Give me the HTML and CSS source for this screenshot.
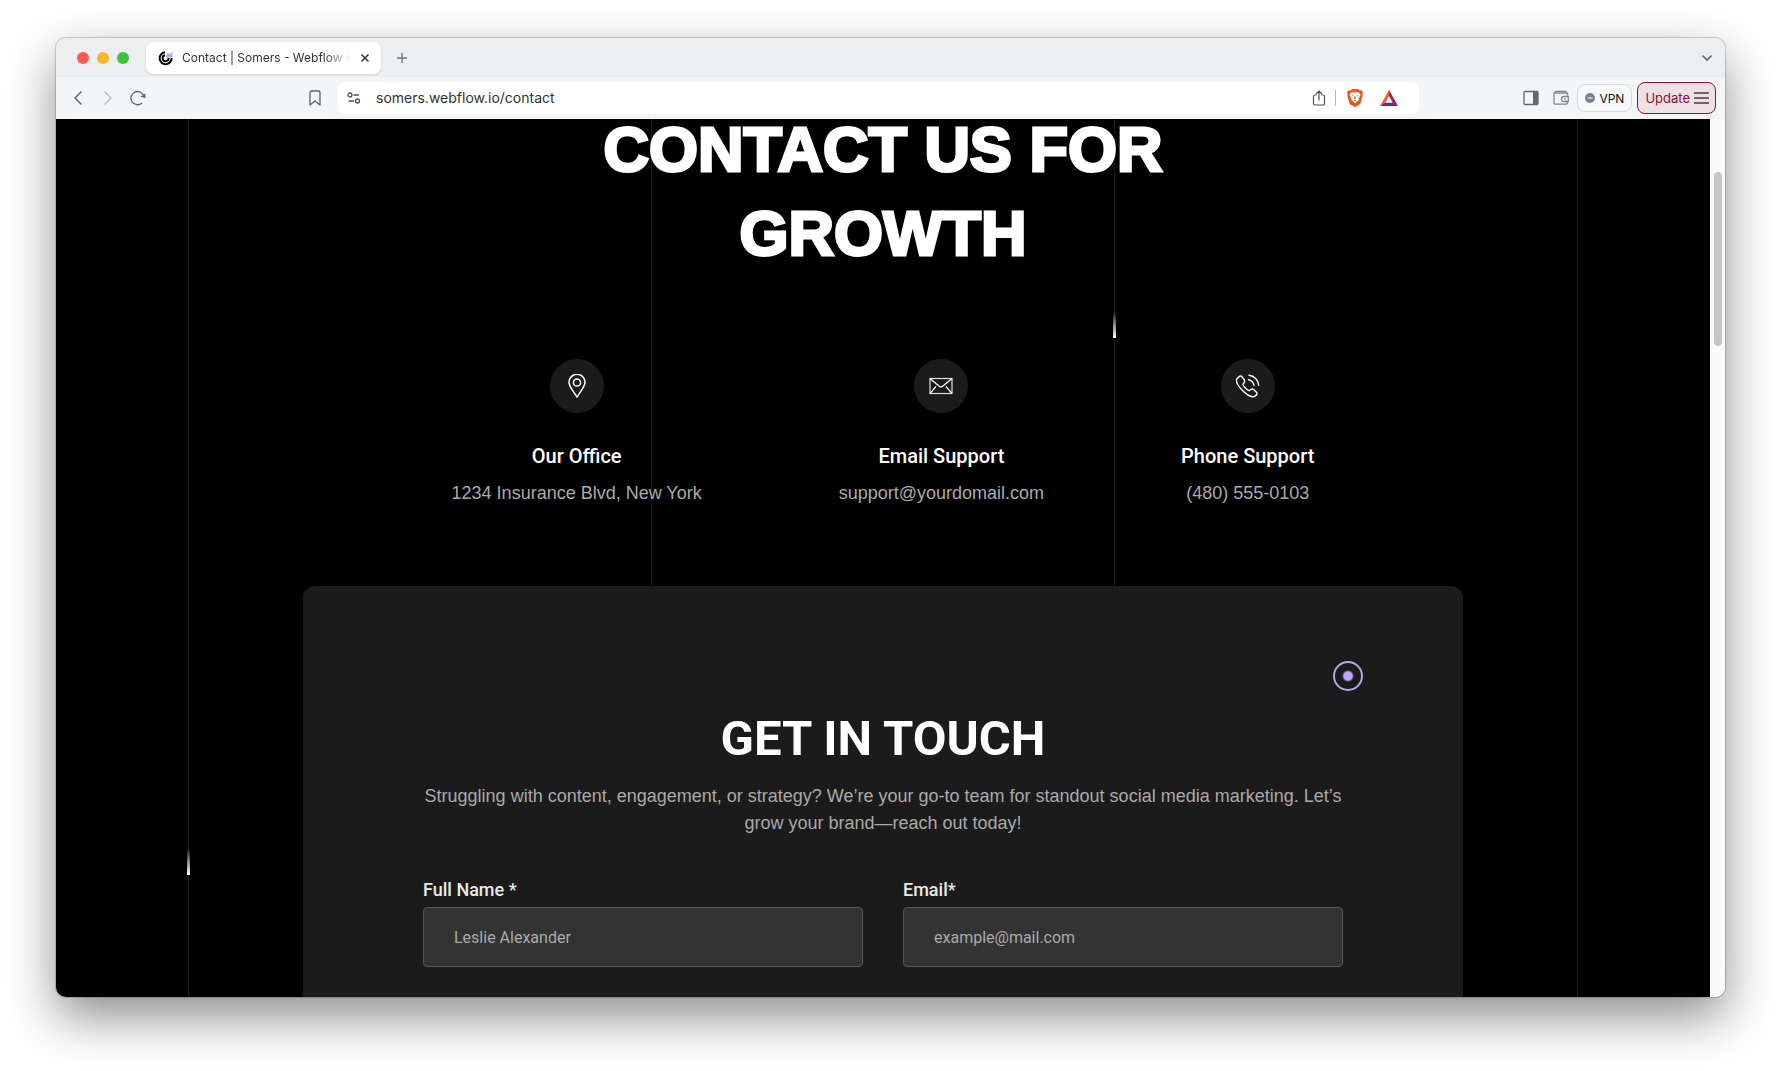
FILE: index.html
```html
<!DOCTYPE html>
<html lang="en">
<head>
  <meta charset="UTF-8" />
  <meta name="viewport" content="width=device-width, initial-scale=1.0"/>
  <title>Contact | Somers - Webflow</title>
  <link rel="stylesheet" href="styles.css">
</head>
<body>
  <div class="window">
    <div class="tabbar">
      <div class="lights">
        <span class="light red"></span>
        <span class="light yellow"></span>
        <span class="light green"></span>
      </div>
      <div class="tab">
        <svg class="favicon" width="16" height="16" viewBox="0 0 16 16" fill="none">
          <path d="M7 2.2A6 6 0 1 0 13.6 8" stroke="#000" stroke-width="2"/>
          <path d="M7 5.2A3 3 0 1 0 10.6 8" stroke="#000" stroke-width="2"/>
          <path d="M8 8l1-5 3 1 3-3-1 4 1 2z" fill="#b9a6f5"/>
        </svg>
        <span class="tab-title">Contact | Somers - Webflow HTML</span>
        <button class="icon-btn tab-close" aria-label="Close tab">
          <svg width="10" height="10" viewBox="0 0 10 10" stroke="#333" stroke-width="1.500"><path d="M1.500 1.500l7 7M8.500 1.500l-7 7"/></svg>
        </button>
      </div>
      <button class="icon-btn new-tab" aria-label="New tab">
        <svg width="12" height="12" viewBox="0 0 12 12" stroke="#6b7075" stroke-width="1.300"><path d="M6 1v10M1 6h10"/></svg>
      </button>
      <button class="icon-btn tab-list" aria-label="Search tabs">
        <svg width="12" height="8" viewBox="0 0 12 8" fill="none" stroke="#56656d" stroke-width="1.600"><path d="M1.500 1.500L6 6l4.500-4.500"/></svg>
      </button>
    </div>

    <div class="toolbar">
      <div class="nav">
        <button class="icon-btn" aria-label="Back">
          <svg width="16" height="16" viewBox="0 0 16 16" fill="none" stroke="#56656d" stroke-width="1.400"><path d="M11.500 1.500L5 8l6.500 6.500"/></svg>
        </button>
        <button class="icon-btn" aria-label="Forward">
          <svg width="16" height="16" viewBox="0 0 16 16" fill="none" stroke="#b9c0c4" stroke-width="1.400"><path d="M4.500 1.500L11 8l-6.500 6.500"/></svg>
        </button>
        <button class="icon-btn" aria-label="Reload">
          <svg width="16" height="16" viewBox="0 0 16 16" fill="none" stroke="#56656d" stroke-width="1.300"><path d="M12 13A6.600 6.600 0 1 1 13.800 6"/><path d="M15.500 3.500v4.500l-5-1.200z" fill="#56656d" stroke="none"/></svg>
        </button>
      </div>
      <button class="icon-btn bookmark" aria-label="Bookmark">
        <svg width="12" height="16" viewBox="0 0 12 16" fill="none" stroke="#56656d" stroke-width="1.300" stroke-linejoin="round"><path d="M1 2.500A1.500 1.500 0 0 1 2.500 1h7A1.500 1.500 0 0 1 11 2.500V15l-5-4-5 4z"/></svg>
      </button>
      <div class="address">
        <svg width="14" height="12" viewBox="0 0 14 12" fill="none" stroke="#4b5358" stroke-width="1.300"><circle cx="3" cy="3" r="2"/><path d="M6.500 3H12"/><circle cx="10.500" cy="9" r="2"/><path d="M1.500 9H7"/></svg>
        <input class="url" type="text" value="somers.webflow.io/contact" aria-label="Address">
        <button class="icon-btn" aria-label="Share">
          <svg width="14" height="16" viewBox="0 0 14 16" fill="none" stroke="#4b5358" stroke-width="1.200"><path d="M4.500 5H3a1.500 1.500 0 0 0-1.500 1.500v7A1.500 1.500 0 0 0 3 15h8a1.500 1.500 0 0 0 1.500-1.500v-7A1.500 1.500 0 0 0 11 5H9.500M7 10.500V1.500M4 4l3-3 3 3"/></svg>
        </button>
        <span class="divider"></span>
        <button class="icon-btn shield" aria-label="Brave Shields">
          <svg width="16" height="18" viewBox="0 0 16 18"><path d="M5 0h6l1.500 1.500 2-.2L16 3.500l-.7 1.700.4 1.300-2 7.500-1.400 1.700L8 18l-4.300-2.300L2.300 14 .3 6.500l.4-1.300L0 3.500l1.500-2.200 2 .2z" fill="#e8571f"/><path d="M4 3.500L6 3l2 .6L10 3l2 .5 1.500 2.500-2 4 .2 1.500-2 1.300L8 14.500l-1.700-2.200-2-1.300.2-1.500-2-3.500z" fill="#fff"/><path d="M4.500 6l2.200.5-.5 1zM11.500 6l-2.200.5.5 1zM7.600 7h.8l.4 2.500L8 10.200l-.8-.7zM6.600 11.300L8 10.900l1.400.4L8 12.300z" fill="#e8571f"/></svg>
        </button>
        <button class="icon-btn rewards" aria-label="Brave Rewards">
          <svg width="18" height="16" viewBox="0 0 18 16"><path d="M9 0L0 16l5-2.800L9 6z" fill="#ff5a2d"/><path d="M9 0l9 16-5-2.800L9 6z" fill="#9e1f63"/><path d="M0 16h18l-5-3.300H5z" fill="#5b2f91"/></svg>
        </button>
      </div>
      <div class="actions">
        <button class="icon-btn" aria-label="Sidebar">
          <svg width="16" height="16" viewBox="0 0 16 16"><rect x="1" y="1.500" width="14" height="13" rx="1" fill="none" stroke="#5b6b73" stroke-width="1.300"/><path d="M10 1.500h5v13h-5z" fill="#5b6b73"/></svg>
        </button>
        <button class="icon-btn" aria-label="Wallet">
          <svg width="16" height="16" viewBox="0 0 16 16" fill="none" stroke="#7b888e" stroke-width="1.300"><path d="M14.500 5.500V3.200H2.500A1 1 0 0 1 2.500 1.500h10.500v1.700M1 2.500v10.200A1.500 1.500 0 0 0 2.500 14.200h10.500a1.500 1.500 0 0 0 1.500-1.500V12M15.300 6.500h-4.300a2.500 2.500 0 0 0 0 5h4.300z"/><path d="M11 9h1.500"/></svg>
        </button>
        <button class="vpn"><svg width="10" height="10" viewBox="0 0 10 10"><circle cx="5" cy="5" r="5" fill="#7c7f94"/><path d="M2.500 5h5" stroke="#d5d7e2" stroke-width="1.400"/></svg>VPN</button>
        <button class="update">Update<svg width="15" height="12" viewBox="0 0 15 12" stroke="#4a3a45" stroke-width="1.300"><path d="M0 1h15M0 6h15M0 11h15"/></svg></button>
      </div>
    </div>

    <div class="viewport">
      <main class="page">
        <div class="lines">
          <span class="line"><span class="glint glint-low"></span></span>
          <span class="line"></span>
          <span class="line"><span class="glint glint-high"></span></span>
          <span class="line"></span>
        </div>

        <h1 class="hero-title">CONTACT US FOR<br>GROWTH</h1>

        <section class="contacts">
          <div class="contact">
            <div class="contact-icon">
              <svg width="24" height="24" viewBox="0 0 24 24" fill="none" stroke="#fff" stroke-width="1.500" stroke-linejoin="round"><path d="M12 23.200C9.500 18.500 4 13 4 8.300a8 8 0 0 1 16 0C20 13 14.500 18.500 12 23.200z"/><circle cx="12" cy="8.500" r="3.600"/></svg>
            </div>
            <h2>Our Office</h2>
            <p>1234 Insurance Blvd, New York</p>
          </div>
          <div class="contact">
            <div class="contact-icon">
              <svg width="24" height="24" viewBox="0 0 24 24" fill="none" stroke="#fff" stroke-width="1.200"><rect x="1" y="4.500" width="22" height="15" stroke-opacity=".85"/><path d="M1 4.500l9.300 7.800a2.700 2.700 0 0 0 3.400 0L23 4.500M1 19.500l6-7M23 19.500l-6-7"/></svg>
            </div>
            <h2>Email Support</h2>
            <p>support@yourdomail.com</p>
          </div>
          <div class="contact">
            <div class="contact-icon">
              <svg width="24" height="24" viewBox="0 0 24 24" fill="none" stroke="#fff" stroke-width="1.400" stroke-linecap="round" stroke-linejoin="round"><path d="M3.300 2.400L1.200 4.500C-.4 6.200 1 10.500 5.800 15.700c4.800 5 9.700 7.600 12.300 6.800 1.600-.5 2.900-2 2.900-3.300 0-.9-3.200-3.700-4.600-4.300-1.100-.3-2.500 1.800-3.500 1.700-1.700-.5-5.700-4.500-6-6-.1-1 2-2 1.800-3.300C8.500 6 6 2.700 5.200 2.200c-.7-.4-1.300-.3-1.900.2z"/><path d="M12.500 5.800c2.800.3 5.300 2.800 5.500 5.500M13 1.200c5.200.4 9.300 4.800 9.700 10"/></svg>
            </div>
            <h2>Phone Support</h2>
            <p>(480) 555-0103</p>
          </div>
        </section>

        <section class="card">
          <span class="cursor"></span>
          <h2 class="card-title">GET IN TOUCH</h2>
          <p class="card-text">Struggling with content, engagement, or strategy? We’re your go-to team for standout social media marketing. Let’s grow your brand—reach out today!</p>
          <form class="form">
            <div class="field">
              <label for="name">Full Name *</label>
              <input type="text" id="name" placeholder="Leslie Alexander">
            </div>
            <div class="field">
              <label for="email">Email*</label>
              <input type="email" id="email" placeholder="example@mail.com">
            </div>
          </form>
        </section>
      </main>
      <div class="scrollbar"><div class="thumb"></div></div>
    </div>
  </div>
</body>
</html>
```
FILE: styles.css
```css
* { box-sizing: border-box; }
body {
  display: flex;
  height: 100vh;
  margin: 0;
  padding: 38px 56px 74px;
  background: #fff;
  font-family: Inter, "Liberation Sans", sans-serif;
}
h1, h2, p { margin: 0; }
button, input { font-family: inherit; }
.window {
  flex: 1;
  min-width: 0;
  display: flex;
  flex-direction: column;
  border-radius: 10px;
  overflow: hidden;
  background: #f3f5f7;
  box-shadow: 0 0 1px 1px rgba(0,0,0,0.18), 0 20px 50px rgba(0,0,0,0.45);
}

/* browser chrome */
.icon-btn {
  display: flex;
  align-items: center;
  justify-content: center;
  padding: 0;
  border: none;
  background: none;
}
.tabbar {
  display: flex;
  align-items: center;
  height: 39px;
  padding: 0 12px 0 21px;
  background: #eceeef;
}
.lights { display: flex; gap: 8px; margin-right: 17px; }
.light { width: 12px; height: 12px; border-radius: 50%; }
.red { background: #fa5a52; }
.yellow { background: #f9b72a; }
.green { background: #3fc33c; }
.tab {
  display: flex;
  align-items: center;
  width: 235px;
  height: 32px;
  padding: 0 11px 0 12px;
  border-radius: 8px;
  background: #fff;
  box-shadow: 0 1px 3px rgba(0,0,0,0.1);
}
.favicon { margin-right: 8px; }
.tab-title {
  flex: 1;
  overflow: hidden;
  white-space: nowrap;
  font-size: 12px;
  color: #333;
  -webkit-mask-image: linear-gradient(to right, #000 85%, transparent);
  mask-image: linear-gradient(to right, #000 85%, transparent);
}
.tab-close { margin-left: 10px; }
.new-tab { margin-left: 15px; }
.tab-list { margin-left: auto; }
.toolbar {
  display: flex;
  align-items: center;
  height: 42px;
  padding: 0 9px 0 14px;
  background: #f3f5f7;
}
.nav { display: flex; gap: 14px; }
.bookmark { margin-left: 163px; }
.address {
  flex: 1;
  display: flex;
  align-items: center;
  height: 32px;
  margin: 0 104px 0 17px;
  padding: 0 21px 0 9px;
  border-radius: 8px;
  background: #fff;
}
.url {
  flex: 1;
  height: 30px;
  margin-left: 15px;
  padding: 0 0 2px;
  border: none;
  outline: none;
  background: none;
  font-size: 14px;
  color: #333;
}
.divider { width: 1px; height: 16px; margin: 0 11px 0 9px; background: #b4b8bb; }
.rewards { margin-left: 17px; }
.actions { display: flex; align-items: center; gap: 14px; }
.vpn, .update {
  display: flex;
  align-items: center;
  gap: 4px;
  border-radius: 8px;
  white-space: nowrap;
}
.vpn {
  height: 28px;
  margin-left: -6px;
  padding: 0 7px;
  border: 1px solid #d6dade;
  background: #f7f8fa;
  font-size: 12px;
  color: #111;
}
.update {
  height: 32px;
  margin-left: -9px;
  padding: 0 6px 0 7px;
  border: 1px solid #8a1538;
  background: #efe0e6;
  font-size: 13px;
  color: #8a0f35;
}

/* page */
.viewport { flex: 1; min-height: 0; display: flex; overflow: hidden; }
.page {
  position: relative;
  flex: 1;
  overflow: hidden;
  background: #000;
  color: #fff;
  text-align: center;
}
.lines {
  position: absolute;
  top: 0;
  bottom: 0;
  left: 8%;
  right: 8%;
  display: flex;
  justify-content: space-between;
}
.line { position: relative; width: 1px; background: #1c1c1c; }
.glint {
  position: absolute;
  left: -1px;
  width: 3px;
  height: 27px;
  background: linear-gradient(transparent, #fff);
}
.glint-low { top: 729px; }
.glint-high { top: 192px; }
.hero-title {
  position: relative;
  margin-top: -12px;
  font-family: "Liberation Sans", sans-serif;
  font-size: 63px;
  font-weight: 700;
  line-height: 84px;
  -webkit-text-stroke: 3px #fff;
}
.contacts {
  position: relative;
  display: flex;
  justify-content: center;
  gap: 137px;
  margin-top: 84px;
  font-family: "Liberation Sans", sans-serif;
}
.contact {
  display: flex;
  flex-direction: column;
  align-items: center;
  white-space: nowrap;
}
.contact-icon {
  display: flex;
  align-items: center;
  justify-content: center;
  width: 54px;
  height: 54px;
  margin-bottom: 29px;
  border-radius: 50%;
  background: #1b1b1b;
}
.contact h2 {
  margin-bottom: 10px;
  font-family: Roboto, "Liberation Sans", sans-serif;
  font-size: 20px;
  font-weight: 500;
  line-height: 28px;
}
.contact p, .card-text {
  font-size: 18px;
  line-height: 27px;
  color: #aaa;
}
.card {
  position: relative;
  max-width: 1160px;
  margin: 79px auto 0;
  padding: 124px 120px 80px;
  border-radius: 12px;
  background: #1b1b1b;
  font-family: "Liberation Sans", sans-serif;
}
.cursor {
  position: absolute;
  top: 75px;
  right: 100px;
  width: 30px;
  height: 30px;
  border: 2px solid #b9a6e6;
  border-radius: 50%;
  background: radial-gradient(circle, #bda4ff 4px, transparent 6px);
}
.card-title {
  margin-bottom: 15px;
  font-family: Roboto, "Liberation Sans", sans-serif;
  font-size: 49px;
  font-weight: 700;
  line-height: 58px;
}
.form {
  display: grid;
  grid-template-columns: 1fr 1fr;
  gap: 40px;
  margin-top: 39px;
  text-align: left;
}
.field label {
  display: block;
  margin-bottom: 4px;
  font-family: Roboto, "Liberation Sans", sans-serif;
  font-size: 18px;
  font-weight: 500;
  line-height: 27px;
  color: #e8e8e8;
}
.field input {
  width: 100%;
  height: 60px;
  padding: 0 30px;
  border: 1px solid #555;
  border-radius: 4px;
  outline: none;
  background: #333;
  font-family: Roboto, "Liberation Sans", sans-serif;
  font-size: 16px;
  color: #fff;
}
.field input::placeholder { color: #aaa; opacity: 1; }
.scrollbar {
  width: 15px;
  padding: 53px 3px 0 4px;
  background: #fafafa;
}
.thumb { height: 174px; border-radius: 4px; background: #c6c6c6; }
```
